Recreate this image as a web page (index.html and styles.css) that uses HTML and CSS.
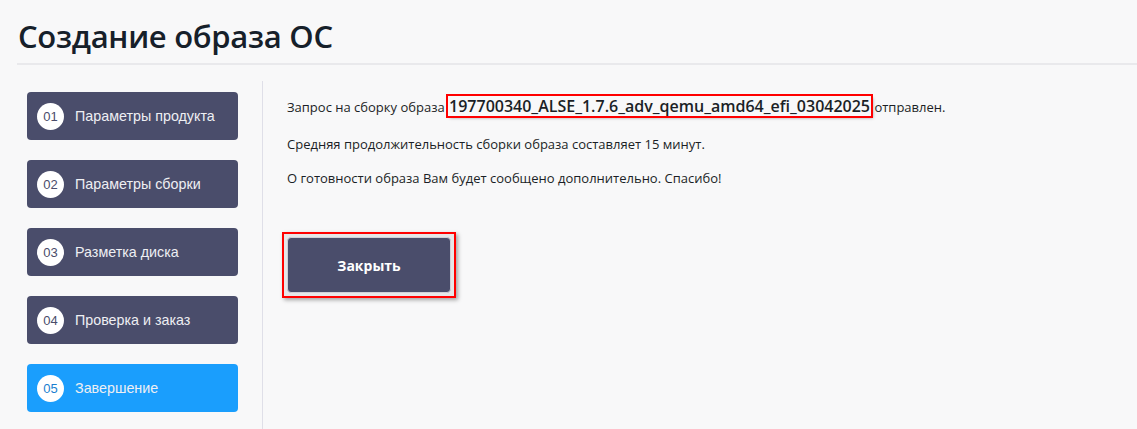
FILE: index.html
```html
<!DOCTYPE html>
<html lang="ru">
<head>
    <meta charset="utf-8">
    <title>Создание образа ОС</title>
    <link rel="stylesheet" href="styles.css">
</head>
<body>
<div class="header">
    <h1>Создание образа ОС</h1>
</div>

<div class="container">
    <div class="steps">
        <div class="step"><span class="stepNum">01</span>Параметры продукта</div>
        <div class="step"><span class="stepNum">02</span>Параметры сборки</div>
        <div class="step"><span class="stepNum">03</span>Разметка диска</div>
        <div class="step"><span class="stepNum">04</span>Проверка и заказ</div>
        <div class="step active"><span class="stepNum">05</span>Завершение</div>
    </div>

    <div class="result">
        <p class="first">Запрос на сборку образа <span class="imageName">197700340_ALSE_1.7.6_adv_qemu_amd64_efi_03042025</span> отправлен.</p>
        <p>Средняя продолжительность сборки образа составляет 15 минут.</p>
        <p>О готовности образа Вам будет сообщено дополнительно. Спасибо!</p>
        <div class="actions">
            <div class="markedBox">
                <button class="closeButton" type="button">Закрыть</button>
            </div>
        </div>
    </div>
</div>
</body>
</html>
```

FILE: styles.css
```css
body {
    margin: 0;
    padding: 0;
    background-color: #f8f8f9;
    font-family: "Open Sans", "Noto Sans", sans-serif;
    color: #1b1f26;
}

.header {
    margin-left: 17px;
    border-bottom: 2px solid #e9e9ec;
    height: 65px;
    box-sizing: border-box;
}

h1 {
    margin: 0;
    padding: 15px 0 0 1px;
    font-size: 31px;
    font-weight: 600;
    letter-spacing: -0.3px;
    color: #16202a;
}

.container {
    display: flex;
    margin-top: 16px;
}

.steps {
    display: flex;
    flex-direction: column;
    gap: 20px;
    width: 263px;
    padding: 11px 0 0 27px;
    border-right: 1px solid #dfdfe8;
    height: 350px;
    box-sizing: border-box;
}

.step {
    display: flex;
    align-items: center;
    width: 211px;
    height: 48px;
    padding-left: 10px;
    box-sizing: border-box;
    background-color: #4a4d6b;
    border-radius: 4px;
    font-family: "Liberation Sans", Arial, sans-serif;
    font-size: 14.3px;
    color: #eeeff3;
}

.step.active {
    background-color: #1a9efd;
}

.stepNum {
    display: flex;
    align-items: center;
    justify-content: center;
    width: 27px;
    height: 27px;
    margin-right: 11px;
    border-radius: 50%;
    background-color: #ffffff;
    color: #4a4d6b;
    font-size: 13px;
}

.step.active .stepNum {
    color: #1a7fd0;
}

.result {
    padding: 15px 0 0 24px;
    font-size: 13px;
}

.result p {
    margin: 0 0 14px 0;
    line-height: 20px;
}

.result p.first {
    margin-bottom: 17px;
}

.imageName {
    display: inline-block;
    font-weight: 600;
    font-size: 16px;
    line-height: 20px;
    padding: 0 1px;
    outline: 2px solid #ff0000;
    box-shadow: 2px 2px 3px rgba(0, 0, 0, 0.35);
}

.actions {
    padding-top: 30px;
    margin-left: -5px;
}

.markedBox {
    display: inline-block;
    padding: 3px;
    border: 2px solid #ff0000;
    background-color: #e6e6e8;
    box-shadow: 2px 2px 4px rgba(0, 0, 0, 0.35);
}

.closeButton {
    display: block;
    width: 164px;
    height: 56px;
    background-color: #4a4d6b;
    color: #ffffff;
    border: 1px solid #d0d0d8;
    border-radius: 4px;
    font-family: "Open Sans", "Noto Sans", sans-serif;
    font-size: 14px;
    font-weight: 700;
}
```
